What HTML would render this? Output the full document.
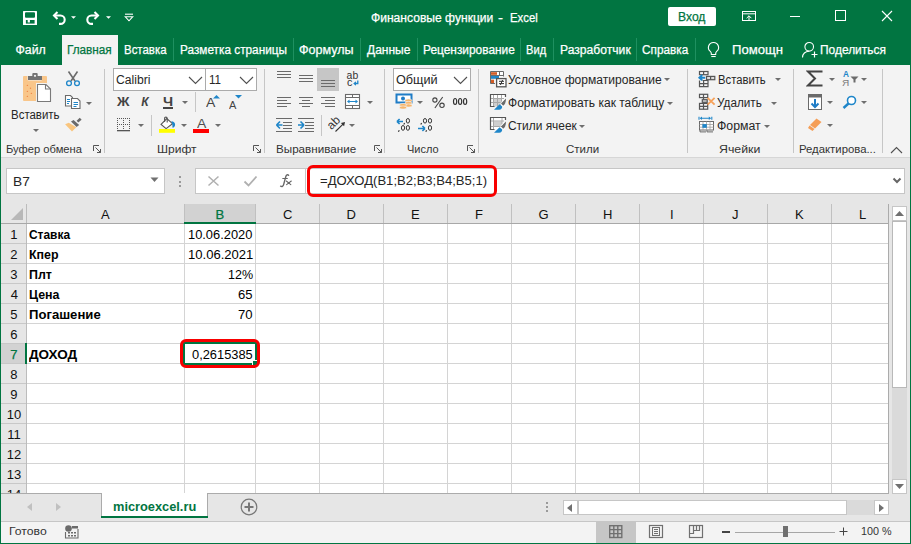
<!DOCTYPE html>
<html><head><meta charset="utf-8"><style>
html,body{margin:0;padding:0;width:911px;height:544px;overflow:hidden;background:#fff;}
body{position:relative;font-family:"Liberation Sans",sans-serif;}
body>*{position:absolute;}
.t{white-space:pre;}
.s{-webkit-text-stroke:0.25px currentColor;}
</style></head><body>
<div style="left:0px;top:0px;width:911px;height:35px;background:#017541;"></div>
<svg style="left:22px;top:10px;" width="16" height="16" viewBox="0 0 16 16"><rect x="1" y="1" width="14" height="14" fill="#fff" rx=".5"/><rect x="3" y="2.2" width="10" height="5.5" rx="1" fill="#017541"/><rect x="3.9" y="10" width="8.7" height="3.6" fill="#017541"/><rect x="5.7" y="10" width="2.2" height="2.5" fill="#fff"/></svg>
<svg style="left:51px;top:10px;" width="26" height="16" viewBox="0 0 26 16"><path d="M3 5.5h6.5a4.2 4.2 0 0 1 0 8.4h-1.5" fill="none" stroke="#fff" stroke-width="2.1"/><path d="M6.5 2L3 5.5L6.5 9" fill="none" stroke="#fff" stroke-width="2.1"/><path d="M20 6.2h5l-2.5 2.5z" fill="#fff"/></svg>
<svg style="left:86px;top:10px;" width="26" height="16" viewBox="0 0 26 16"><path d="M12 5.5h-6.5a4.2 4.2 0 0 0 0 8.4h1.5" fill="none" stroke="#fff" stroke-width="2.1"/><path d="M8.5 2L12 5.5L8.5 9" fill="none" stroke="#fff" stroke-width="2.1"/><path d="M20 6.2h5l-2.5 2.5z" fill="#fff"/></svg>
<svg style="left:124px;top:12px;" width="10" height="10" viewBox="0 0 10 10"><path d="M1 2.2h8" stroke="#fff" stroke-width="1.1"/><path d="M1.3 4.8h7.4L5 8.8z" fill="none" stroke="#fff" stroke-width="1.1"/></svg>
<div class="t s" style="left:370.53px;top:12px;font-size:12.5px;line-height:12.5px;color:#fff;font-weight:400;transform:scaleX(0.9672);transform-origin:0 0;">Финансовые функции</div>
<div class="t s" style="left:498.10px;top:12px;font-size:12.5px;line-height:12.5px;color:#fff;font-weight:400;transform:scaleX(1.2000);transform-origin:0 0;">-</div>
<div class="t s" style="left:509.69px;top:12px;font-size:12.5px;line-height:12.5px;color:#fff;font-weight:400;transform:scaleX(0.9069);transform-origin:0 0;">Excel</div>
<div style="left:668px;top:7px;width:48px;height:19px;background:#fff;border-radius:2px;"></div>
<div class="t s" style="left:678.33px;top:11px;font-size:12.5px;line-height:12.5px;color:#017541;font-weight:400;transform:scaleX(0.9704);transform-origin:0 0;">Вход</div>
<svg style="left:741px;top:10px;" width="16" height="13" viewBox="0 0 16 13"><rect x="1.5" y="1.5" width="13" height="9" fill="none" stroke="#fff" stroke-width="1"/><path d="M1.5 3.8h13" stroke="#fff" stroke-width="1"/><path d="M8 10.5V5.8M5.6 8.2L8 5.8L10.4 8.2" fill="none" stroke="#fff" stroke-width="1"/></svg>
<div style="left:790px;top:16px;width:10px;height:1px;background:#fff;"></div>
<svg style="left:835px;top:10px;" width="12" height="12" viewBox="0 0 12 12"><rect x="0.5" y="0.5" width="10" height="10" fill="none" stroke="#fff" stroke-width="1"/></svg>
<svg style="left:881px;top:10px;" width="12" height="12" viewBox="0 0 12 12"><path d="M1 1L11 11M11 1L1 11" stroke="#fff" stroke-width="1.1"/></svg>
<div style="left:0px;top:35px;width:911px;height:30px;background:#017541;"></div>
<div style="left:62px;top:35px;width:56px;height:30px;background:#f3f3f3;"></div>
<div class="t s" style="left:15.50px;top:44px;font-size:12.3px;line-height:12.3px;color:#fff;font-weight:400;">Файл</div>
<div class="t s" style="left:124.07px;top:44px;font-size:12.3px;line-height:12.3px;color:#fff;font-weight:400;transform:scaleX(0.9318);transform-origin:0 0;">Вставка</div>
<div class="t s" style="left:179.54px;top:44px;font-size:12.3px;line-height:12.3px;color:#fff;font-weight:400;transform:scaleX(0.9591);transform-origin:0 0;">Разметка страницы</div>
<div class="t s" style="left:298.98px;top:44px;font-size:12.3px;line-height:12.3px;color:#fff;font-weight:400;transform:scaleX(1.0192);transform-origin:0 0;">Формулы</div>
<div class="t s" style="left:367.00px;top:44px;font-size:12.3px;line-height:12.3px;color:#fff;font-weight:400;transform:scaleX(0.9773);transform-origin:0 0;">Данные</div>
<div class="t s" style="left:422.78px;top:44px;font-size:12.3px;line-height:12.3px;color:#fff;font-weight:400;transform:scaleX(0.9677);transform-origin:0 0;">Рецензирование</div>
<div class="t s" style="left:526.10px;top:44px;font-size:12.3px;line-height:12.3px;color:#fff;font-weight:400;transform:scaleX(0.9048);transform-origin:0 0;">Вид</div>
<div class="t s" style="left:559.51px;top:44px;font-size:12.3px;line-height:12.3px;color:#fff;font-weight:400;transform:scaleX(0.9857);transform-origin:0 0;">Разработчик</div>
<div class="t s" style="left:642.04px;top:44px;font-size:12.3px;line-height:12.3px;color:#fff;font-weight:400;transform:scaleX(0.9574);transform-origin:0 0;">Справка</div>
<div class="t s" style="left:731.93px;top:44px;font-size:12.3px;line-height:12.3px;color:#fff;font-weight:400;transform:scaleX(1.0652);transform-origin:0 0;">Помощн</div>
<div class="t s" style="left:820.03px;top:44px;font-size:12.3px;line-height:12.3px;color:#fff;font-weight:400;transform:scaleX(0.9697);transform-origin:0 0;">Поделиться</div>
<div class="t s" style="left:67.04px;top:44px;font-size:12.3px;line-height:12.3px;color:#017541;font-weight:400;transform:scaleX(0.9556);transform-origin:0 0;">Главная</div>
<div style="left:173px;top:38px;width:1px;height:23px;background:#1f9060;"></div>
<div style="left:293px;top:38px;width:1px;height:23px;background:#1f9060;"></div>
<div style="left:360px;top:38px;width:1px;height:23px;background:#1f9060;"></div>
<div style="left:417px;top:38px;width:1px;height:23px;background:#1f9060;"></div>
<div style="left:520px;top:38px;width:1px;height:23px;background:#1f9060;"></div>
<div style="left:553px;top:38px;width:1px;height:23px;background:#1f9060;"></div>
<div style="left:636px;top:38px;width:1px;height:23px;background:#1f9060;"></div>
<div style="left:695px;top:38px;width:1px;height:23px;background:#1f9060;"></div>
<svg style="left:705px;top:41px;" width="17" height="18" viewBox="0 0 17 18"><path d="M8.5 1.5a5 5 0 0 0-3.2 8.9c.7.6 1 1.3 1 2.1v1h4.4v-1c0-.8.3-1.5 1-2.1a5 5 0 0 0-3.2-8.9z" fill="none" stroke="#fff" stroke-width="1.1"/><path d="M6.3 15.5h4.4" stroke="#fff" stroke-width="1.1"/></svg>
<svg style="left:801px;top:41px;" width="18" height="18" viewBox="0 0 18 18"><circle cx="8.2" cy="5.8" r="4.3" fill="none" stroke="#fff" stroke-width="1.1"/><path d="M1.5 16.5c0-3.8 2.8-6.2 6.5-6.2" fill="none" stroke="#fff" stroke-width="1.1"/><path d="M10.5 13.5h6M13.5 10.5v6" stroke="#fff" stroke-width="1.2"/></svg>
<div style="left:0px;top:65px;width:911px;height:92px;background:#f3f3f3;"></div>
<div style="left:0px;top:157px;width:911px;height:1px;background:#d6d6d6;"></div>
<div style="left:104px;top:69px;width:1px;height:84px;background:#c6c6c6;"></div>
<div style="left:264px;top:69px;width:1px;height:84px;background:#c6c6c6;"></div>
<div style="left:384px;top:69px;width:1px;height:84px;background:#c6c6c6;"></div>
<div style="left:478px;top:69px;width:1px;height:84px;background:#c6c6c6;"></div>
<div style="left:687px;top:69px;width:1px;height:84px;background:#c6c6c6;"></div>
<div style="left:793px;top:69px;width:1px;height:84px;background:#c6c6c6;"></div>
<div style="left:882px;top:69px;width:1px;height:84px;background:#c6c6c6;"></div>
<div class="t" style="left:5.78px;top:144px;font-size:11px;line-height:11px;color:#333;font-weight:400;transform:scaleX(1.0162);transform-origin:0 0;">Буфер обмена</div>
<div class="t" style="left:156.61px;top:144px;font-size:11px;line-height:11px;color:#333;font-weight:400;transform:scaleX(1.0943);transform-origin:0 0;">Шрифт</div>
<div class="t" style="left:276.24px;top:144px;font-size:11px;line-height:11px;color:#333;font-weight:400;transform:scaleX(1.0581);transform-origin:0 0;">Выравнивание</div>
<div class="t" style="left:407.00px;top:144px;font-size:11px;line-height:11px;color:#333;font-weight:400;">Число</div>
<div class="t" style="left:566.25px;top:144px;font-size:11px;line-height:11px;color:#333;font-weight:400;transform:scaleX(1.0467);transform-origin:0 0;">Стили</div>
<div class="t" style="left:719.08px;top:144px;font-size:11px;line-height:11px;color:#333;font-weight:400;transform:scaleX(1.1200);transform-origin:0 0;">Ячейки</div>
<div class="t" style="left:798.57px;top:144px;font-size:11px;line-height:11px;color:#333;font-weight:400;transform:scaleX(1.0301);transform-origin:0 0;">Редактирова...</div>
<svg style="left:22px;top:72px;" width="31" height="32" viewBox="0 0 31 32">
<rect x="1" y="4" width="24" height="25" rx="1" fill="#f9c68a"/>
<rect x="5.5" y="3.5" width="14.5" height="5" rx="1" fill="#f3f3f3"/>
<rect x="6" y="4" width="14" height="4" fill="#737373"/>
<rect x="10.3" y="1" width="5.4" height="4" rx="1" fill="#737373"/>
<circle cx="13" cy="3.8" r="1.1" fill="#f3f3f3"/>
<g fill="#ef8a4c"><circle cx="5.4" cy="13.4" r=".7"/><circle cx="8.5" cy="16.2" r=".7"/><circle cx="5.4" cy="19.4" r=".7"/><circle cx="9.4" cy="21.4" r=".7"/><circle cx="5.4" cy="24.4" r=".7"/></g>
<path d="M14 11h10.5l5.5 5.5v14.5h-16z" fill="#f3f3f3"/>
<path d="M15.5 12.5h8.5l4.5 4.5v12.5h-13z" fill="#fff" stroke="#7a7a7a" stroke-width="1.1"/>
<path d="M23.5 12.5v4.5h5" fill="none" stroke="#7a7a7a" stroke-width="1.1"/>
</svg>
<div class="t" style="left:10.74px;top:109px;font-size:12px;line-height:12px;color:#262626;font-weight:400;transform:scaleX(0.9551);transform-origin:0 0;">Вставить</div>
<svg style="left:33px;top:129px;" width="6" height="4" viewBox="0 0 6 4"><path d="M0 0h6L3 3z" fill="#6e6e6e"/></svg>
<svg style="left:64px;top:70px;" width="18" height="17" viewBox="0 0 18 17">
<path d="M4.5 1.5L11 11M13.5 1.5L7 11" stroke="#6b6b6b" stroke-width="1.6"/>
<circle cx="5" cy="13.2" r="2.4" fill="#f3f3f3" stroke="#1f86c9" stroke-width="1.3"/>
<circle cx="13" cy="13.2" r="2.4" fill="#f3f3f3" stroke="#1f86c9" stroke-width="1.3"/>
</svg>
<svg style="left:64px;top:94px;" width="18" height="16" viewBox="0 0 18 16">
<path d="M1.5 1.5h5l2 2v8.5h-7z" fill="#fff" stroke="#6b6b6b" stroke-width="1.1"/>
<g stroke="#1f86c9" stroke-width="1"><path d="M3 5.5h3M3 7.5h3M3 9.5h2"/></g>
<path d="M7.5 4.5h6l2.5 2.5v7.5h-8.5z" fill="#fff" stroke="#6b6b6b" stroke-width="1.1"/>
<g stroke="#1f86c9" stroke-width="1"><path d="M9.5 8.5h4.5M9.5 10.5h4.5M9.5 12.5h3"/></g>
</svg>
<svg style="left:86px;top:102px;" width="6" height="4" viewBox="0 0 6 4"><path d="M0 0h6L3 3z" fill="#6e6e6e"/></svg>
<svg style="left:62px;top:114px;" width="22" height="20" viewBox="0 0 22 20"><path d="M3.1 10.3L6.8 8.8L14.3 13.2L10 17.5z" fill="#f9c57e"/><path d="M9 7.6L11.6 5.9L17.2 11L14.6 12.9z" fill="#6b6b6b"/><path d="M14.6 6.8L17.8 3.8L19.6 5.7L16.3 8.6z" fill="#6b6b6b"/></svg>
<div style="left:113px;top:68px;width:93px;height:23px;border:1px solid #ababab;background:#fff;box-sizing:border-box;"></div>
<div style="left:205px;top:68px;width:52px;height:23px;border:1px solid #ababab;background:#fff;box-sizing:border-box;"></div>
<div class="t" style="left:115.53px;top:74px;font-size:12.5px;line-height:12.5px;color:#262626;font-weight:400;transform:scaleX(0.9706);transform-origin:0 0;">Calibri</div>
<div class="t" style="left:208.97px;top:74px;font-size:12.5px;line-height:12.5px;color:#262626;font-weight:400;transform:scaleX(0.9273);transform-origin:0 0;">11</div>
<svg style="left:188px;top:76px;" width="15" height="9" viewBox="0 0 15 9"><path d="M1 1L7.5 7.5L14 1" fill="none" stroke="#505050" stroke-width="1.1"/></svg>
<svg style="left:239px;top:76px;" width="15" height="9" viewBox="0 0 15 9"><path d="M1 1L7.5 7.5L14 1" fill="none" stroke="#505050" stroke-width="1.1"/></svg>
<div class="t" style="left:117.40px;top:96px;font-size:12px;line-height:12px;color:#444444;font-weight:700;transform:scaleX(1.1455);transform-origin:0 0;">Ж</div>
<div class="t" style="left:141.20px;top:96px;font-size:12px;line-height:12px;color:#444444;font-weight:700;font-style:italic;">К</div>
<div class="t" style="left:162.60px;top:96px;font-size:12px;line-height:12px;color:#444444;font-weight:700;transform:scaleX(1.2000);transform-origin:0 0;">Ч</div>
<div style="left:163px;top:107px;width:10px;height:1.5px;background:#444444;"></div>
<svg style="left:182px;top:101px;" width="6" height="4" viewBox="0 0 6 4"><path d="M0 0h6L3 3z" fill="#6e6e6e"/></svg>
<div style="left:195px;top:92px;width:1px;height:20px;background:#c6c6c6;"></div>
<div class="t" style="left:206.00px;top:96px;font-size:13px;line-height:13px;color:#444444;font-weight:400;transform:scaleX(1.0778);transform-origin:0 0;">A</div>
<svg style="left:213px;top:95px;" width="7" height="4" viewBox="0 0 7 4"><path d="M0 3.5L3.5 0L7 3.5z" fill="#1f86c9"/></svg>
<div class="t" style="left:229.10px;top:101px;font-size:10px;line-height:10px;color:#444444;font-weight:400;transform:scaleX(1.1000);transform-origin:0 0;">A</div>
<svg style="left:235px;top:95px;" width="7" height="4" viewBox="0 0 7 4"><path d="M0 0h7L3.5 3.5z" fill="#1f86c9"/></svg>
<svg style="left:116px;top:117px;" width="15" height="15" viewBox="0 0 15 15"><g fill="#555"><rect x="1" y="1" width="1" height="1"/><rect x="3" y="1" width="1" height="1"/><rect x="5" y="1" width="1" height="1"/><rect x="7" y="1" width="1" height="1"/><rect x="9" y="1" width="1" height="1"/><rect x="11" y="1" width="1" height="1"/><rect x="13" y="1" width="1" height="1"/><rect x="1" y="3" width="1" height="1"/><rect x="7" y="3" width="1" height="1"/><rect x="13" y="3" width="1" height="1"/><rect x="1" y="5" width="1" height="1"/><rect x="7" y="5" width="1" height="1"/><rect x="13" y="5" width="1" height="1"/><rect x="1" y="7" width="1" height="1"/><rect x="3" y="7" width="1" height="1"/><rect x="5" y="7" width="1" height="1"/><rect x="7" y="7" width="1" height="1"/><rect x="9" y="7" width="1" height="1"/><rect x="11" y="7" width="1" height="1"/><rect x="13" y="7" width="1" height="1"/><rect x="1" y="9" width="1" height="1"/><rect x="7" y="9" width="1" height="1"/><rect x="13" y="9" width="1" height="1"/><rect x="1" y="11" width="1" height="1"/><rect x="7" y="11" width="1" height="1"/><rect x="13" y="11" width="1" height="1"/></g><rect x="1" y="13" width="13" height="1.3" fill="#555"/></svg>
<svg style="left:138px;top:124px;" width="6" height="4" viewBox="0 0 6 4"><path d="M0 0h6L3 3z" fill="#6e6e6e"/></svg>
<div style="left:151px;top:115px;width:1px;height:21px;background:#c6c6c6;"></div>
<svg style="left:158px;top:116px;" width="19" height="18" viewBox="0 0 19 18"><path d="M3.1 8.4L8.8 2.6L14.5 7.7L8.1 12.6z" fill="#fff" stroke="#555" stroke-width="1.1"/><path d="M6.6 6V2.4a1.3 1.3 0 0 1 2.6 0V6.6" fill="none" stroke="#555" stroke-width="1.1"/><path d="M13.3 5.2C15.6 5.2 17.1 6.5 17.1 8.5C17.1 10.2 16.1 11.7 14.5 11.7L14.3 8.2z" fill="#1f86c9"/><rect x="1" y="13" width="16" height="3.8" fill="#ffff00"/></svg>
<svg style="left:181px;top:124px;" width="6" height="4" viewBox="0 0 6 4"><path d="M0 0h6L3 3z" fill="#6e6e6e"/></svg>
<div class="t" style="left:197.00px;top:117px;font-size:13.5px;line-height:13.5px;color:#505050;font-weight:400;transform:scaleX(1.0333);transform-origin:0 0;">A</div>
<div style="left:193px;top:129px;width:16px;height:4px;background:#ff0000;"></div>
<svg style="left:215px;top:124px;" width="6" height="4" viewBox="0 0 6 4"><path d="M0 0h6L3 3z" fill="#6e6e6e"/></svg>
<div style="left:277px;top:71px;width:14px;height:1px;background:#6a6a6a;"></div>
<div style="left:277px;top:74px;width:14px;height:1px;background:#6a6a6a;"></div>
<div style="left:277px;top:77px;width:14px;height:1px;background:#6a6a6a;"></div>
<div style="left:299px;top:75px;width:14px;height:1px;background:#6a6a6a;"></div>
<div style="left:299px;top:78px;width:14px;height:1px;background:#6a6a6a;"></div>
<div style="left:299px;top:81px;width:14px;height:1px;background:#6a6a6a;"></div>
<div style="left:317px;top:68px;width:22px;height:23px;background:#c6c6c6;"></div>
<div style="left:321px;top:80px;width:14px;height:1px;background:#6a6a6a;"></div>
<div style="left:321px;top:83px;width:14px;height:1px;background:#6a6a6a;"></div>
<div style="left:321px;top:86px;width:14px;height:1px;background:#6a6a6a;"></div>
<svg style="left:344px;top:68px;" width="18" height="20" viewBox="0 0 18 20"><text x="2.6" y="10.7" font-family="Liberation Sans" font-size="10.8" fill="#333" textLength="11.6" lengthAdjust="spacingAndGlyphs">ab</text><text x="3.1" y="18" font-family="Liberation Sans" font-size="10.8" fill="#333">c</text></svg>
<svg style="left:352px;top:80px;" width="8" height="7" viewBox="0 0 8 7"><path d="M5.8 0.5v3h-3.5" fill="none" stroke="#1f86c9" stroke-width="1.3"/><path d="M4 1.2L1.2 3.5L4 5.8z" fill="#1f86c9"/></svg>
<div style="left:277px;top:97px;width:14px;height:1px;background:#6a6a6a;"></div>
<div style="left:277px;top:100px;width:10px;height:1px;background:#6a6a6a;"></div>
<div style="left:277px;top:103px;width:14px;height:1px;background:#6a6a6a;"></div>
<div style="left:277px;top:106px;width:10px;height:1px;background:#6a6a6a;"></div>
<div style="left:299px;top:97px;width:14px;height:1px;background:#6a6a6a;"></div>
<div style="left:302px;top:100px;width:8px;height:1px;background:#6a6a6a;"></div>
<div style="left:299px;top:103px;width:14px;height:1px;background:#6a6a6a;"></div>
<div style="left:302px;top:106px;width:8px;height:1px;background:#6a6a6a;"></div>
<div style="left:321px;top:97px;width:14px;height:1px;background:#6a6a6a;"></div>
<div style="left:325px;top:100px;width:10px;height:1px;background:#6a6a6a;"></div>
<div style="left:321px;top:103px;width:14px;height:1px;background:#6a6a6a;"></div>
<div style="left:325px;top:106px;width:10px;height:1px;background:#6a6a6a;"></div>
<svg style="left:344px;top:93px;" width="17" height="17" viewBox="0 0 17 17">
<rect x="1.5" y="1.5" width="14" height="14" fill="#fff" stroke="#6a6a6a" stroke-width="1.1"/>
<path d="M1.5 4.5h14M1.5 12.5h14M8.5 1.5v3M8.5 12.5v3" stroke="#6a6a6a" stroke-width="1"/>
<path d="M4 8.5h9" stroke="#1f86c9" stroke-width="1"/><path d="M3 8.5L5.5 6.5v4zM14 8.5L11.5 6.5v4z" fill="#1f86c9"/>
</svg>
<svg style="left:367px;top:101px;" width="6" height="4" viewBox="0 0 6 4"><path d="M0 0h6L3 3z" fill="#6e6e6e"/></svg>
<svg style="left:275px;top:117px;" width="18" height="15" viewBox="0 0 18 15">
<path d="M1 1.5h16M8 5.5h9M8 8.5h9M8 11.5h9M1 14.5h16" stroke="#6a6a6a" stroke-width="1"/>
<path d="M1.5 8L5 4.5M1.5 8L5 11.5M1.5 8H7.5" stroke="#1f86c9" stroke-width="1.6" fill="none"/>
</svg>
<svg style="left:297px;top:117px;" width="18" height="15" viewBox="0 0 18 15">
<path d="M1 1.5h16M8 5.5h9M8 8.5h9M8 11.5h9M1 14.5h16" stroke="#6a6a6a" stroke-width="1"/>
<path d="M7 8L3.5 4.5M7 8L3.5 11.5M7 8H1" stroke="#1f86c9" stroke-width="1.6" fill="none"/>
</svg>
<div style="left:321px;top:115px;width:1px;height:21px;background:#c6c6c6;"></div>
<svg style="left:326px;top:114px;" width="24" height="22" viewBox="0 0 24 22"><text transform="translate(5.6 16.2) rotate(-45)" font-family="Liberation Sans" font-size="12" fill="#333">ab</text><path d="M9.5 17.5L17.6 9.6" stroke="#333" stroke-width="1.1"/><path d="M19 8.1L14.9 9L18.1 12.2z" fill="#333"/></svg>
<svg style="left:349px;top:124px;" width="6" height="4" viewBox="0 0 6 4"><path d="M0 0h6L3 3z" fill="#6e6e6e"/></svg>
<div style="left:393px;top:68px;width:78px;height:23px;border:1px solid #ababab;background:#fff;box-sizing:border-box;"></div>
<div class="t" style="left:395.54px;top:74px;font-size:12px;line-height:12px;color:#262626;font-weight:400;transform:scaleX(1.0553);transform-origin:0 0;">Общий</div>
<svg style="left:453px;top:76px;" width="15" height="9" viewBox="0 0 15 9"><path d="M1 1L7.5 7.5L14 1" fill="none" stroke="#505050" stroke-width="1.1"/></svg>
<svg style="left:395px;top:93px;" width="19" height="18" viewBox="0 0 19 18">
<rect x="1.5" y="1.5" width="15" height="8" fill="#fff" stroke="#1f7cc6" stroke-width="2"/>
<circle cx="8" cy="5.5" r="2" fill="#1f7cc6"/>
<g fill="#f7b56b" stroke="#f3f3f3" stroke-width=".6"><ellipse cx="13.5" cy="7.5" rx="3.5" ry="1.6"/><ellipse cx="13.5" cy="10" rx="3.5" ry="1.6"/><ellipse cx="13.5" cy="12.5" rx="3.5" ry="1.6"/><ellipse cx="8" cy="12" rx="3.5" ry="1.6"/><ellipse cx="8" cy="14.5" rx="3.5" ry="1.6"/></g>
</svg>
<svg style="left:417px;top:101px;" width="6" height="4" viewBox="0 0 6 4"><path d="M0 0h6L3 3z" fill="#6e6e6e"/></svg>
<svg style="left:430px;top:95px;" width="17" height="15" viewBox="0 0 17 15"><circle cx="4.9" cy="5" r="2.1" fill="none" stroke="#444" stroke-width="1.1"/><circle cx="12" cy="10.3" r="2.2" fill="none" stroke="#444" stroke-width="1.1"/><path d="M4.9 13L12.7 2" stroke="#444" stroke-width="1.1"/></svg>
<svg style="left:451px;top:96px;" width="18" height="11" viewBox="0 0 18 11"><g fill="none" stroke="#333" stroke-width="1.2"><ellipse cx="4.1" cy="5.5" rx="1.6" ry="3"/><ellipse cx="9.1" cy="5.5" rx="1.6" ry="3"/><ellipse cx="14.1" cy="5.5" rx="1.6" ry="3"/></g></svg>
<svg style="left:394px;top:114px;" width="40" height="20" viewBox="0 0 40 20">
<path d="M3 7.5L5.6 5M3 7.5L5.6 10M3 7.5H9" stroke="#1f86c9" stroke-width="1.7" fill="none"/>
<g fill="none" stroke="#333" stroke-width="1"><ellipse cx="13.9" cy="6.8" rx="1.6" ry="2.3"/><ellipse cx="9" cy="13.9" rx="1.6" ry="2.4"/><ellipse cx="13.9" cy="13.9" rx="1.6" ry="2.4"/>
<ellipse cx="31" cy="6.8" rx="1.6" ry="2.3"/><ellipse cx="36" cy="6.8" rx="1.6" ry="2.3"/><ellipse cx="36" cy="13.9" rx="1.6" ry="2.4"/></g>
<path d="M10.6 9L9.8 10.5M5.3 16.2L4.4 17.8M27.6 9L26.8 10.5M32.6 16.2L31.8 17.8" stroke="#333" stroke-width="1.2"/>
<path d="M31 14.5L28.4 12M31 14.5L28.4 17M31 14.5H24" stroke="#1f86c9" stroke-width="1.7" fill="none"/>
</svg>
<svg style="left:489px;top:70px;" width="19" height="19" viewBox="0 0 19 19"><rect x="1.5" y="1.5" width="13" height="5" fill="#fff"/><path d="M1.5 13.5V1.5H14.5V6.5M1.5 13.5H6M1.5 5.5H14.5M10.5 1.5V5.5" fill="none" stroke="#6a6a6a" stroke-width="1"/><rect x="2" y="2.2" width="6" height="2.6" fill="#d35c25"/><rect x="2" y="6" width="8" height="2.8" fill="#1f86c9"/><rect x="2" y="9.7" width="3" height="3.3" fill="#d35c25"/><rect x="7.6" y="8.6" width="9.4" height="8.2" fill="#fff" stroke="#555" stroke-width="1.3"/><path d="M10 11.3H15M10 13.6H15M13.6 10L11.4 15" stroke="#333" stroke-width="1"/></svg>
<div class="t" style="left:508.13px;top:74px;font-size:12.5px;line-height:12.5px;color:#262626;font-weight:400;transform:scaleX(0.9662);transform-origin:0 0;">Условное форматирование</div>
<svg style="left:664px;top:78px;" width="6" height="4" viewBox="0 0 6 4"><path d="M0 0h6L3 3z" fill="#6e6e6e"/></svg>
<svg style="left:489px;top:93px;" width="19" height="19" viewBox="0 0 19 19"><rect x="1.5" y="1.5" width="14" height="12" fill="#fff"/><rect x="5" y="5.5" width="7" height="8" fill="#cfcfcf"/><path d="M1.5 5.5H15M1.5 9.5H13M4.5 1.5V13.5M8.5 1.5V13.5M12.5 1.5V9" stroke="#a8a8a8" stroke-width="1"/><path d="M5.5 13.5H1.5V1.5H16.5V4" fill="none" stroke="#555" stroke-width="1.2"/><path d="M17 5.2C17 9 15.8 12 14.2 12.8L12 10.6z" fill="#6b6b6b"/><path d="M11.2 10.6L16.6 5" stroke="#f3f3f3" stroke-width="1"/><path d="M5 16.8L10.6 11.2L13.2 13.6C13.2 15.6 12.2 16.8 10.2 16.8z" fill="#1f86c9"/></svg>
<svg style="left:489px;top:116px;" width="19" height="19" viewBox="0 0 19 19"><rect x="1.5" y="1.5" width="14" height="12" fill="#fff"/><rect x="5" y="5.5" width="8" height="5" fill="#cfcfcf"/><path d="M1.5 5H15M1.5 10.5H13M4.5 1.5V13.5M13 1.5V8" stroke="#a8a8a8" stroke-width="1"/><path d="M5.5 13.5H1.5V1.5H16.5V4" fill="none" stroke="#555" stroke-width="1.2"/><path d="M17 5.2C17 9 15.8 12 14.2 12.8L12 10.6z" fill="#6b6b6b"/><path d="M11.2 10.6L16.6 5" stroke="#f3f3f3" stroke-width="1"/><path d="M5 16.8L10.6 11.2L13.2 13.6C13.2 15.6 12.2 16.8 10.2 16.8z" fill="#1f86c9"/></svg>
<div class="t" style="left:508.34px;top:97px;font-size:12.5px;line-height:12.5px;color:#262626;font-weight:400;transform:scaleX(0.9605);transform-origin:0 0;">Форматировать как таблицу</div>
<svg style="left:667px;top:102px;" width="6" height="4" viewBox="0 0 6 4"><path d="M0 0h6L3 3z" fill="#6e6e6e"/></svg>
<div class="t" style="left:508.35px;top:120px;font-size:12.5px;line-height:12.5px;color:#262626;font-weight:400;transform:scaleX(0.9535);transform-origin:0 0;">Стили ячеек</div>
<svg style="left:579px;top:125px;" width="6" height="4" viewBox="0 0 6 4"><path d="M0 0h6L3 3z" fill="#6e6e6e"/></svg>
<svg style="left:697px;top:70px;" width="20" height="18" viewBox="0 0 20 18"><g fill="none" stroke="#555" stroke-width="1.2"><rect x="2.5" y="1.5" width="8.5" height="3.2"/><path d="M6.6 1.5V4.7M2.5 10.5V16.6H11V10.5H5.5M2.5 13.6H11M6.6 10.5V16.6"/><rect x="9.5" y="6.4" width="8.3" height="3.3" fill="#ddd"/><path d="M13.6 6.4V9.7"/></g><path d="M2.6 7.7H8.2M5.2 5L2.4 7.7L5.2 10.4" fill="none" stroke="#1f86c9" stroke-width="2"/></svg>
<div class="t" style="left:717.50px;top:74px;font-size:12.5px;line-height:12.5px;color:#262626;font-weight:400;transform:scaleX(0.9000);transform-origin:0 0;">Вставить</div>
<svg style="left:775px;top:78px;" width="6" height="4" viewBox="0 0 6 4"><path d="M0 0h6L3 3z" fill="#6e6e6e"/></svg>
<svg style="left:697px;top:93px;" width="20" height="18" viewBox="0 0 20 18"><g fill="none" stroke="#555" stroke-width="1.2"><rect x="2.5" y="1.3" width="8.2" height="3.3"/><path d="M6.5 1.3V6.7M2.5 13.3H10.7M6.5 10.4V16.2"/><rect x="5.3" y="6.7" width="4.9" height="2.6" fill="#ddd"/><rect x="2.5" y="10.4" width="8.2" height="5.8"/></g><path d="M10.6 4.8L17.6 11.6M17.6 4.8L10.6 11.6" stroke="#f7a25a" stroke-width="1.8"/></svg>
<div class="t" style="left:717.46px;top:97px;font-size:12.5px;line-height:12.5px;color:#262626;font-weight:400;transform:scaleX(0.9391);transform-origin:0 0;">Удалить</div>
<svg style="left:771px;top:102px;" width="6" height="4" viewBox="0 0 6 4"><path d="M0 0h6L3 3z" fill="#6e6e6e"/></svg>
<svg style="left:697px;top:116px;" width="20" height="18" viewBox="0 0 20 18"><path d="M2 0.8V3.8M14.8 0.8V3.8M3.5 2.3H13.3" stroke="#1f86c9" stroke-width="1.1"/><path d="M2.8 2.3L5 0.6V4zM14 2.3L11.8 0.6V4z" fill="#1f86c9"/><rect x="2.5" y="5.5" width="14" height="8.5" fill="#fff" stroke="#6a6a6a" stroke-width="1"/><path d="M2.5 8.5H16.5M2.5 11.2H16.5M6 5.5V14M9.5 5.5V14M13 5.5V14" stroke="#a0a0a0" stroke-width=".8"/><rect x="5.4" y="8.1" width="4.4" height="3.7" fill="#1f86c9"/><path d="M3 14.3V15.9H9M10 14.3V15.9H16" fill="none" stroke="#6a6a6a" stroke-width="1"/></svg>
<div class="t" style="left:717.42px;top:120px;font-size:12.5px;line-height:12.5px;color:#262626;font-weight:400;transform:scaleX(0.9837);transform-origin:0 0;">Формат</div>
<svg style="left:764px;top:125px;" width="6" height="4" viewBox="0 0 6 4"><path d="M0 0h6L3 3z" fill="#6e6e6e"/></svg>
<svg style="left:806px;top:70px;" width="17" height="17" viewBox="0 0 17 17"><path d="M15.5 2.5V1.5H2L9 8.5L2 15.5h13.5v-1" fill="none" stroke="#444" stroke-width="2"/></svg>
<svg style="left:829px;top:78px;" width="6" height="4" viewBox="0 0 6 4"><path d="M0 0h6L3 3z" fill="#6e6e6e"/></svg>
<div class="t" style="left:843.10px;top:70px;font-size:8.5px;line-height:8.5px;color:#1f86c9;font-weight:700;transform:scaleX(0.9667);transform-origin:0 0;">A</div>
<div class="t" style="left:841.92px;top:79px;font-size:8.5px;line-height:8.5px;color:#7a7a7a;font-weight:400;transform:scaleX(1.1800);transform-origin:0 0;">Я</div>
<svg style="left:850px;top:76px;" width="9" height="7" viewBox="0 0 9 7"><path d="M0.5 0.5h8L5.5 3.5v3h-2v-3z" fill="#6b6b6b"/></svg>
<svg style="left:861px;top:78px;" width="6" height="4" viewBox="0 0 6 4"><path d="M0 0h6L3 3z" fill="#6e6e6e"/></svg>
<svg style="left:807px;top:93px;" width="16" height="18" viewBox="0 0 16 18">
<rect x="1.5" y="1.5" width="13" height="15" fill="#fff" stroke="#6a6a6a" stroke-width="1"/>
<rect x="1" y="1" width="14" height="3.5" fill="#6a6a6a"/>
<path d="M8 6v8M4.5 10.5L8 14L11.5 10.5" stroke="#1f7cc6" stroke-width="2" fill="none"/>
</svg>
<svg style="left:827px;top:101px;" width="6" height="4" viewBox="0 0 6 4"><path d="M0 0h6L3 3z" fill="#6e6e6e"/></svg>
<svg style="left:842px;top:95px;" width="16" height="14" viewBox="0 0 16 14"><circle cx="9.5" cy="5.5" r="4" fill="#fff" stroke="#1f86c9" stroke-width="1.6"/><path d="M6.5 8.5L1.5 13" stroke="#1f86c9" stroke-width="2.4"/></svg>
<svg style="left:861px;top:101px;" width="6" height="4" viewBox="0 0 6 4"><path d="M0 0h6L3 3z" fill="#6e6e6e"/></svg>
<svg style="left:807px;top:117px;" width="16" height="15" viewBox="0 0 16 15"><path d="M9.5 1.5L14.5 5L8 11.5L3 8z" fill="#f59e56"/><path d="M2.5 8.5L7.5 12L5.5 14L1 11z" fill="#f59e56"/></svg>
<svg style="left:827px;top:124px;" width="6" height="4" viewBox="0 0 6 4"><path d="M0 0h6L3 3z" fill="#6e6e6e"/></svg>
<svg style="left:890px;top:146px;" width="13" height="8" viewBox="0 0 13 8"><path d="M1 7L6.5 1.5L12 7" fill="none" stroke="#505050" stroke-width="1.1"/></svg>
<svg style="left:93px;top:145px;" width="9" height="9" viewBox="0 0 9 9"><path d="M0.5 6V0.5H6" fill="none" stroke="#555" stroke-width="1"/><path d="M2.5 2.5L7.5 7.5M4 7.5h3.5V4" fill="none" stroke="#555" stroke-width="1"/></svg>
<svg style="left:253px;top:145px;" width="9" height="9" viewBox="0 0 9 9"><path d="M0.5 6V0.5H6" fill="none" stroke="#555" stroke-width="1"/><path d="M2.5 2.5L7.5 7.5M4 7.5h3.5V4" fill="none" stroke="#555" stroke-width="1"/></svg>
<svg style="left:373.5px;top:145px;" width="9" height="9" viewBox="0 0 9 9"><path d="M0.5 6V0.5H6" fill="none" stroke="#555" stroke-width="1"/><path d="M2.5 2.5L7.5 7.5M4 7.5h3.5V4" fill="none" stroke="#555" stroke-width="1"/></svg>
<svg style="left:467px;top:145px;" width="9" height="9" viewBox="0 0 9 9"><path d="M0.5 6V0.5H6" fill="none" stroke="#555" stroke-width="1"/><path d="M2.5 2.5L7.5 7.5M4 7.5h3.5V4" fill="none" stroke="#555" stroke-width="1"/></svg>
<div style="left:0px;top:158px;width:911px;height:46px;background:#e6e6e6;"></div>
<div style="left:6px;top:168px;width:159px;height:26px;background:#fff;border:1px solid #c6c6c6;box-sizing:border-box;"></div>
<div class="t" style="left:12.54px;top:175px;font-size:13px;line-height:13px;color:#262626;font-weight:400;transform:scaleX(1.0571);transform-origin:0 0;">B7</div>
<svg style="left:150px;top:177px;" width="9" height="6" viewBox="0 0 9 6"><path d="M0.5 0.5h8L4.5 5z" fill="#707070"/></svg>
<div style="left:179px;top:176px;width:2px;height:2px;background:#9a9a9a;"></div>
<div style="left:179px;top:180.5px;width:2px;height:2px;background:#9a9a9a;"></div>
<div style="left:179px;top:185px;width:2px;height:2px;background:#9a9a9a;"></div>
<div style="left:195px;top:168px;width:111px;height:26px;background:#fff;border:1px solid #c6c6c6;box-sizing:border-box;"></div>
<div style="left:305px;top:168px;width:600px;height:26px;background:#fff;border:1px solid #c6c6c6;box-sizing:border-box;"></div>
<svg style="left:207px;top:175px;" width="13" height="12" viewBox="0 0 13 12"><path d="M1.5 1.5L11.5 10.5M11.5 1.5L1.5 10.5" stroke="#b0b0b0" stroke-width="1.5"/></svg>
<svg style="left:243px;top:175px;" width="15" height="12" viewBox="0 0 15 12"><path d="M1.5 6.5L5.5 10.5L13.5 1.5" fill="none" stroke="#b0b0b0" stroke-width="1.8"/></svg>
<svg style="left:278px;top:172px;" width="16" height="17" viewBox="0 0 16 17"><g fill="none" stroke="#666" stroke-linecap="round"><path d="M10.6 3.2C9.6 2.4 8.3 2.8 7.8 4.6L5.6 12.6C5.1 14.3 4 14.8 2.6 14.2" stroke-width="1.4"/><path d="M4.8 6.5H9.3" stroke-width="1.2"/><path d="M8.3 9L12.8 12.6M13.3 9L8.6 12.6" stroke-width="1.1"/></g></svg>
<div class="t" style="left:319.53px;top:174px;font-size:13.5px;line-height:13.5px;color:#262626;font-weight:400;transform:scaleX(0.9678);transform-origin:0 0;">=ДОХОД(B1;B2;B3;B4;B5;1)</div>
<svg style="left:892px;top:177px;" width="10" height="7" viewBox="0 0 10 7"><path d="M1.5 1.5L5 5L8.5 1.5" fill="none" stroke="#666" stroke-width="2"/></svg>
<div style="left:307px;top:165px;width:190px;height:32px;border:3.5px solid #f80000;border-radius:6px;box-sizing:border-box;"></div>
<div style="left:0px;top:204px;width:911px;height:20px;background:#e6e6e6;"></div>
<div style="left:26px;top:224px;width:862px;height:269px;background:#fff;"></div>
<div style="left:0px;top:224px;width:26px;height:269px;background:#e6e6e6;"></div>
<div style="left:27px;top:243px;width:861px;height:1px;background:#d4d4d4;"></div>
<div style="left:0px;top:243px;width:26px;height:1px;background:#c8c8c8;"></div>
<div style="left:27px;top:263px;width:861px;height:1px;background:#d4d4d4;"></div>
<div style="left:0px;top:263px;width:26px;height:1px;background:#c8c8c8;"></div>
<div style="left:27px;top:283px;width:861px;height:1px;background:#d4d4d4;"></div>
<div style="left:0px;top:283px;width:26px;height:1px;background:#c8c8c8;"></div>
<div style="left:27px;top:303px;width:861px;height:1px;background:#d4d4d4;"></div>
<div style="left:0px;top:303px;width:26px;height:1px;background:#c8c8c8;"></div>
<div style="left:27px;top:323px;width:861px;height:1px;background:#d4d4d4;"></div>
<div style="left:0px;top:323px;width:26px;height:1px;background:#c8c8c8;"></div>
<div style="left:27px;top:343px;width:861px;height:1px;background:#d4d4d4;"></div>
<div style="left:0px;top:343px;width:26px;height:1px;background:#c8c8c8;"></div>
<div style="left:27px;top:363px;width:861px;height:1px;background:#d4d4d4;"></div>
<div style="left:0px;top:363px;width:26px;height:1px;background:#c8c8c8;"></div>
<div style="left:27px;top:383px;width:861px;height:1px;background:#d4d4d4;"></div>
<div style="left:0px;top:383px;width:26px;height:1px;background:#c8c8c8;"></div>
<div style="left:27px;top:403px;width:861px;height:1px;background:#d4d4d4;"></div>
<div style="left:0px;top:403px;width:26px;height:1px;background:#c8c8c8;"></div>
<div style="left:27px;top:423px;width:861px;height:1px;background:#d4d4d4;"></div>
<div style="left:0px;top:423px;width:26px;height:1px;background:#c8c8c8;"></div>
<div style="left:27px;top:443px;width:861px;height:1px;background:#d4d4d4;"></div>
<div style="left:0px;top:443px;width:26px;height:1px;background:#c8c8c8;"></div>
<div style="left:27px;top:463px;width:861px;height:1px;background:#d4d4d4;"></div>
<div style="left:0px;top:463px;width:26px;height:1px;background:#c8c8c8;"></div>
<div style="left:27px;top:483px;width:861px;height:1px;background:#d4d4d4;"></div>
<div style="left:0px;top:483px;width:26px;height:1px;background:#c8c8c8;"></div>
<div style="left:184px;top:224px;width:1px;height:269px;background:#d4d4d4;"></div>
<div style="left:184px;top:204px;width:1px;height:19px;background:#c0c0c0;"></div>
<div style="left:255px;top:224px;width:1px;height:269px;background:#d4d4d4;"></div>
<div style="left:255px;top:204px;width:1px;height:19px;background:#c0c0c0;"></div>
<div style="left:319px;top:224px;width:1px;height:269px;background:#d4d4d4;"></div>
<div style="left:319px;top:204px;width:1px;height:19px;background:#c0c0c0;"></div>
<div style="left:383px;top:224px;width:1px;height:269px;background:#d4d4d4;"></div>
<div style="left:383px;top:204px;width:1px;height:19px;background:#c0c0c0;"></div>
<div style="left:447px;top:224px;width:1px;height:269px;background:#d4d4d4;"></div>
<div style="left:447px;top:204px;width:1px;height:19px;background:#c0c0c0;"></div>
<div style="left:511px;top:224px;width:1px;height:269px;background:#d4d4d4;"></div>
<div style="left:511px;top:204px;width:1px;height:19px;background:#c0c0c0;"></div>
<div style="left:575px;top:224px;width:1px;height:269px;background:#d4d4d4;"></div>
<div style="left:575px;top:204px;width:1px;height:19px;background:#c0c0c0;"></div>
<div style="left:639px;top:224px;width:1px;height:269px;background:#d4d4d4;"></div>
<div style="left:639px;top:204px;width:1px;height:19px;background:#c0c0c0;"></div>
<div style="left:703px;top:224px;width:1px;height:269px;background:#d4d4d4;"></div>
<div style="left:703px;top:204px;width:1px;height:19px;background:#c0c0c0;"></div>
<div style="left:767px;top:224px;width:1px;height:269px;background:#d4d4d4;"></div>
<div style="left:767px;top:204px;width:1px;height:19px;background:#c0c0c0;"></div>
<div style="left:831px;top:224px;width:1px;height:269px;background:#d4d4d4;"></div>
<div style="left:831px;top:204px;width:1px;height:19px;background:#c0c0c0;"></div>
<div style="left:26px;top:204px;width:1px;height:289px;background:#bcbcbc;"></div>
<div style="left:0px;top:223px;width:888px;height:1px;background:#a8a8a8;"></div>
<div style="left:185px;top:204px;width:70px;height:19px;background:#d2d2d2;"></div>
<div style="left:184px;top:222px;width:72px;height:2px;background:#017541;"></div>
<div style="left:1px;top:344px;width:24px;height:19px;background:#d2d2d2;"></div>
<div style="left:25px;top:343px;width:2px;height:21px;background:#017541;"></div>
<svg style="left:10px;top:207px;" width="14" height="14" viewBox="0 0 14 14"><path d="M13 1V13H1z" fill="#b8b8b8"/></svg>
<div class="t" style="left:101.00px;top:208px;font-size:13px;line-height:13px;color:#111;font-weight:400;">A</div>
<div class="t s" style="left:215.50px;top:208px;font-size:13px;line-height:13px;color:#017541;font-weight:400;">B</div>
<div class="t" style="left:283.00px;top:208px;font-size:13px;line-height:13px;color:#111;font-weight:400;">C</div>
<div class="t" style="left:346.50px;top:208px;font-size:13px;line-height:13px;color:#111;font-weight:400;">D</div>
<div class="t" style="left:411.00px;top:208px;font-size:13px;line-height:13px;color:#111;font-weight:400;">E</div>
<div class="t" style="left:475.00px;top:208px;font-size:13px;line-height:13px;color:#111;font-weight:400;">F</div>
<div class="t" style="left:538.50px;top:208px;font-size:13px;line-height:13px;color:#111;font-weight:400;">G</div>
<div class="t" style="left:603.00px;top:208px;font-size:13px;line-height:13px;color:#111;font-weight:400;">H</div>
<div class="t" style="left:670.00px;top:208px;font-size:13px;line-height:13px;color:#111;font-weight:400;">I</div>
<div class="t" style="left:732.00px;top:208px;font-size:13px;line-height:13px;color:#111;font-weight:400;">J</div>
<div class="t" style="left:795.00px;top:208px;font-size:13px;line-height:13px;color:#111;font-weight:400;">K</div>
<div class="t" style="left:859.00px;top:208px;font-size:13px;line-height:13px;color:#111;font-weight:400;">L</div>
<div class="t" style="left:10.30px;top:228px;font-size:13px;line-height:13px;color:#111;font-weight:400;">1</div>
<div class="t" style="left:10.30px;top:248px;font-size:13px;line-height:13px;color:#111;font-weight:400;">2</div>
<div class="t" style="left:10.30px;top:268px;font-size:13px;line-height:13px;color:#111;font-weight:400;">3</div>
<div class="t" style="left:10.80px;top:288px;font-size:13px;line-height:13px;color:#111;font-weight:400;">4</div>
<div class="t" style="left:10.30px;top:308px;font-size:13px;line-height:13px;color:#111;font-weight:400;">5</div>
<div class="t" style="left:10.30px;top:328px;font-size:13px;line-height:13px;color:#111;font-weight:400;">6</div>
<div class="t s" style="left:10.30px;top:348px;font-size:13px;line-height:13px;color:#017541;font-weight:400;">7</div>
<div class="t" style="left:10.30px;top:368px;font-size:13px;line-height:13px;color:#111;font-weight:400;">8</div>
<div class="t" style="left:10.30px;top:388px;font-size:13px;line-height:13px;color:#111;font-weight:400;">9</div>
<div class="t" style="left:6.80px;top:408px;font-size:13px;line-height:13px;color:#111;font-weight:400;">10</div>
<div class="t" style="left:7.30px;top:428px;font-size:13px;line-height:13px;color:#111;font-weight:400;">11</div>
<div class="t" style="left:6.80px;top:448px;font-size:13px;line-height:13px;color:#111;font-weight:400;">12</div>
<div class="t" style="left:6.80px;top:468px;font-size:13px;line-height:13px;color:#111;font-weight:400;">13</div>
<div class="t" style="left:6.80px;top:488px;font-size:13px;line-height:13px;color:#111;font-weight:400;">14</div>
<div style="left:0px;top:493px;width:911px;height:1px;background:#ababab;"></div>
<div style="left:888px;top:204px;width:1px;height:290px;background:#ababab;"></div>
<div class="t" style="left:28.98px;top:228px;font-size:13px;line-height:13px;color:#000;font-weight:700;transform:scaleX(0.9182);transform-origin:0 0;">Ставка</div>
<div class="t" style="left:28.95px;top:248px;font-size:13px;line-height:13px;color:#000;font-weight:700;transform:scaleX(0.9550);transform-origin:0 0;">Кпер</div>
<div class="t" style="left:28.95px;top:268px;font-size:13px;line-height:13px;color:#000;font-weight:700;transform:scaleX(0.9550);transform-origin:0 0;">Плт</div>
<div class="t" style="left:28.95px;top:288px;font-size:13px;line-height:13px;color:#000;font-weight:700;transform:scaleX(0.9550);transform-origin:0 0;">Цена</div>
<div class="t" style="left:28.89px;top:308px;font-size:13px;line-height:13px;color:#000;font-weight:700;transform:scaleX(1.0086);transform-origin:0 0;">Погашение</div>
<div class="t" style="left:28.70px;top:348px;font-size:13px;line-height:13px;color:#000;font-weight:700;transform:scaleX(1.0391);transform-origin:0 0;">ДОХОД</div>
<div class="t" style="left:188.31px;top:228px;font-size:13px;line-height:13px;color:#000;font-weight:400;transform:scaleX(0.9891);transform-origin:0 0;">10.06.2020</div>
<div class="t" style="left:188.30px;top:248px;font-size:13px;line-height:13px;color:#000;font-weight:400;transform:scaleX(1.0048);transform-origin:0 0;">10.06.2021</div>
<div class="t" style="left:227.54px;top:268px;font-size:13px;line-height:13px;color:#000;font-weight:400;transform:scaleX(0.9640);transform-origin:0 0;">12%</div>
<div class="t" style="left:238.49px;top:288px;font-size:13px;line-height:13px;color:#000;font-weight:400;transform:scaleX(1.0077);transform-origin:0 0;">65</div>
<div class="t" style="left:238.49px;top:308px;font-size:13px;line-height:13px;color:#000;font-weight:400;transform:scaleX(1.0077);transform-origin:0 0;">70</div>
<div class="t" style="left:192.31px;top:348px;font-size:13px;line-height:13px;color:#000;font-weight:400;transform:scaleX(0.9883);transform-origin:0 0;">0,2615385</div>
<div style="left:183px;top:342px;width:74px;height:23px;border:2px solid #017541;box-sizing:border-box;"></div>
<div style="left:253px;top:361px;width:5px;height:5px;background:#017541;"></div>
<div style="left:252px;top:360px;width:1px;height:6px;background:#fff;"></div>
<div style="left:252px;top:360px;width:6px;height:1px;background:#fff;"></div>
<div style="left:180px;top:339px;width:80px;height:29px;border:3.5px solid #f80000;border-radius:6px;box-sizing:border-box;"></div>
<div style="left:889px;top:204px;width:22px;height:290px;background:#e6e6e6;"></div>
<div style="left:892px;top:206px;width:15px;height:15px;background:#fff;border:1px solid #c6c6c6;box-sizing:border-box;"></div>
<svg style="left:895px;top:211px;" width="9" height="5" viewBox="0 0 9 5"><path d="M0 5L4.5 0L9 5z" fill="#707070"/></svg>
<div style="left:892px;top:221px;width:15px;height:258px;background:#dadada;"></div>
<div style="left:892px;top:221px;width:15px;height:167px;background:#fff;border:1px solid #b9b9b9;box-sizing:border-box;"></div>
<div style="left:892px;top:479px;width:15px;height:15px;background:#fff;border:1px solid #c6c6c6;box-sizing:border-box;"></div>
<svg style="left:895px;top:484px;" width="9" height="5" viewBox="0 0 9 5"><path d="M0 0L4.5 5L9 0z" fill="#707070"/></svg>
<div style="left:0px;top:494px;width:911px;height:27px;background:#e6e6e6;"></div>
<div style="left:0px;top:521px;width:911px;height:1px;background:#c6c6c6;"></div>
<svg style="left:27px;top:503px;" width="6" height="8" viewBox="0 0 6 8"><path d="M5 0V8L0 4z" fill="#c0c0c0"/></svg>
<svg style="left:56px;top:503px;" width="6" height="8" viewBox="0 0 6 8"><path d="M0 0V8L5 4z" fill="#c0c0c0"/></svg>
<div style="left:101px;top:493px;width:107px;height:24px;background:#fff;border-left:1px solid #ababab;border-right:1px solid #ababab;box-sizing:border-box;"></div>
<div style="left:101px;top:516px;width:107px;height:2px;background:#017541;"></div>
<div class="t" style="left:112.72px;top:500px;font-size:13px;line-height:13px;color:#017541;font-weight:700;transform:scaleX(0.9843);transform-origin:0 0;">microexcel.ru</div>
<svg style="left:240px;top:498px;" width="18" height="18" viewBox="0 0 18 18"><circle cx="9" cy="9" r="7.8" fill="none" stroke="#777" stroke-width="1.2"/><path d="M9 4.5v9M4.5 9h9" stroke="#777" stroke-width="2"/></svg>
<div style="left:546px;top:502px;width:2px;height:2px;background:#9a9a9a;"></div>
<div style="left:546px;top:506px;width:2px;height:2px;background:#9a9a9a;"></div>
<div style="left:546px;top:510px;width:2px;height:2px;background:#9a9a9a;"></div>
<div style="left:563px;top:500px;width:15px;height:15px;background:#fff;border:1px solid #c6c6c6;box-sizing:border-box;"></div>
<svg style="left:567px;top:504px;" width="5" height="8" viewBox="0 0 5 8"><path d="M5 0V8L0 4z" fill="#707070"/></svg>
<div style="left:578px;top:500px;width:269px;height:15px;background:#fff;border:1px solid #c6c6c6;box-sizing:border-box;"></div>
<div style="left:847px;top:500px;width:27px;height:15px;background:#dadada;"></div>
<div style="left:874px;top:500px;width:15px;height:15px;background:#fff;border:1px solid #c6c6c6;box-sizing:border-box;"></div>
<svg style="left:879px;top:504px;" width="5" height="8" viewBox="0 0 5 8"><path d="M0 0V8L5 4z" fill="#707070"/></svg>
<div style="left:0px;top:522px;width:911px;height:21px;background:#f3f3f3;"></div>
<div class="t" style="left:8.59px;top:526px;font-size:11px;line-height:11px;color:#333;font-weight:400;transform:scaleX(1.1094);transform-origin:0 0;">Готово</div>
<div style="left:596px;top:522px;width:40px;height:21px;background:#c6c6c6;"></div>
<svg style="left:608px;top:524px;" width="16" height="15" viewBox="0 0 16 15"><g fill="none" stroke="#707070" stroke-width="1.4"><rect x="1.7" y="1.7" width="12.1" height="11.8"/><path d="M5.8 1.7v11.8M9.8 1.7v11.8M1.7 5.6h12.1M1.7 9.6h12.1"/></g></svg>
<svg style="left:648px;top:524px;" width="16" height="15" viewBox="0 0 16 15"><g fill="none" stroke="#707070"><rect x="1.5" y="1.5" width="13" height="12" stroke-width="1.2"/><rect x="4.5" y="3.5" width="7" height="8" stroke-width="1"/><path d="M6 5.5h4M6 7.5h4M6 9.5h4" stroke-width="1"/></g></svg>
<svg style="left:688px;top:524px;" width="16" height="15" viewBox="0 0 16 15"><g fill="none" stroke="#707070" stroke-width="1.2"><rect x="1.5" y="1.5" width="13" height="12"/><path d="M5.5 1.5v5h6v-5M1.5 9.5h4v-3M8.5 1.5v5"/></g></svg>
<div style="left:722px;top:531px;width:8px;height:1.5px;background:#444;"></div>
<div style="left:735px;top:532px;width:100px;height:1px;background:#a6a6a6;"></div>
<div style="left:783px;top:526px;width:5px;height:11px;background:#707070;"></div>
<svg style="left:839px;top:527px;" width="10" height="10" viewBox="0 0 10 10"><path d="M0.5 4.5h8M4.5 0.5v8" stroke="#444" stroke-width="1"/></svg>
<div class="t" style="left:860.76px;top:526px;font-size:11.5px;line-height:11.5px;color:#333;font-weight:400;transform:scaleX(0.9387);transform-origin:0 0;">100 %</div>
<svg style="left:64px;top:524px;" width="16" height="15" viewBox="0 0 16 15"><circle cx="4.5" cy="4.5" r="3.3" fill="#6b6b6b"/><rect x="8" y="2" width="6" height="2.5" fill="#6b6b6b"/><path d="M1.5 8v6h12.5V5" fill="none" stroke="#6b6b6b" stroke-width="1.1"/><g fill="#6b6b6b"><rect x="4" y="8" width="2" height="1.5"/><rect x="7" y="8" width="2" height="1.5"/><rect x="10" y="8" width="2" height="1.5"/><rect x="4" y="11" width="2" height="1.5"/><rect x="7" y="11" width="2" height="1.5"/><rect x="10" y="11" width="2" height="1.5"/></g></svg>
<div style="left:0px;top:35px;width:1px;height:509px;background:#017541;"></div>
<div style="left:910px;top:35px;width:1px;height:509px;background:#017541;"></div>
<div style="left:0px;top:543px;width:911px;height:1px;background:#017541;"></div>
</body></html>
